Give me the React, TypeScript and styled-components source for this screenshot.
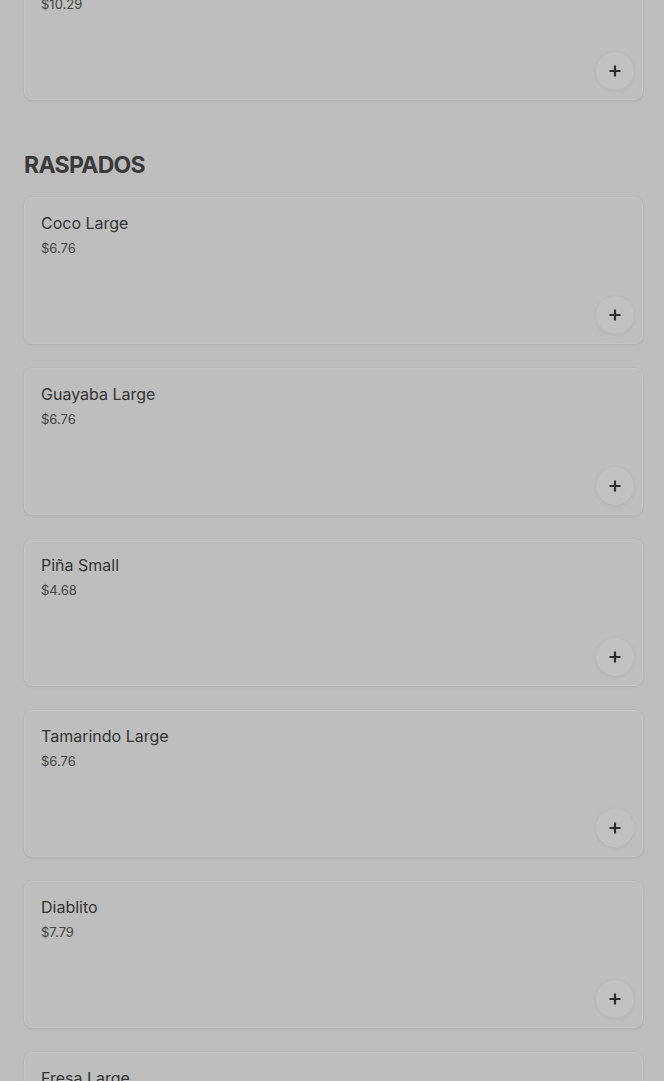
import styled, {createGlobalStyle} from 'styled-components'

const GlobalStyle = createGlobalStyle`
  html, body {
    margin: 0;
    padding: 0;
    background: #bdbdbd;
    font-family: Inter, "Noto Sans", Roboto, sans-serif;
    overflow: hidden;
  }
`

type Item = {name: string; price: string}

const previous: Item = {name: 'Horchata Large', price: '$10.29'}

const raspados: Item[] = [
  {name: 'Coco Large', price: '$6.76'},
  {name: 'Guayaba Large', price: '$6.76'},
  {name: 'Piña Small', price: '$4.68'},
  {name: 'Tamarindo Large', price: '$6.76'},
  {name: 'Diablito', price: '$7.79'},
  {name: 'Fresa Large', price: '$6.76'},
]

const Page = styled.main`
  padding: 0 21px 0 24px;
  margin-top: -47px;
`

const Section = styled.section`
  display: flex;
  flex-direction: column;
  gap: 24px;
`

const Heading = styled.h2`
  margin: 25px 0 -8px;
  font-size: 23px;
  line-height: 32px;
  font-weight: 700;
  letter-spacing: -0.7px;
  color: #3a3a3a;
`

const Card = styled.article`
  display: flex;
  flex-direction: column;
  height: 147px;
  box-sizing: border-box;
  padding: 15px 8px 9px 16px;
  border: 1px solid #c5c5c5;
  border-radius: 8px;
  background: #bebebe;
  box-shadow: 0 1px 3px rgba(0, 0, 0, 0.06), 0 0 0 1px rgba(0, 0, 0, 0.02);
`

const Title = styled.h3`
  margin: 0;
  font-size: 16px;
  line-height: 20px;
  font-weight: 420;
  color: #333;
`

const Price = styled.span`
  margin-top: 6px;
  font-size: 13px;
  line-height: 18px;
  color: #444;
`

const AddButton = styled.button`
  margin-top: auto;
  align-self: flex-end;
  width: 38px;
  height: 38px;
  display: grid;
  place-items: center;
  padding: 0;
  border: none;
  border-radius: 50%;
  background: #c1c1c1;
  box-shadow: 0 1px 4px rgba(0, 0, 0, 0.08);
  color: #2b2b2b;
`

const Plus = () => (
  <svg width="14" height="14" viewBox="0 0 14 14" fill="none">
    <path d="M7 1.5v11M1.5 7h11" stroke="currentColor" strokeWidth="2.2" />
  </svg>
)

const MenuCard = ({item}: {item: Item}) => (
  <Card>
    <Title>{item.name}</Title>
    <Price>{item.price}</Price>
    <AddButton aria-label={`Add ${item.name}`}>
      <Plus />
    </AddButton>
  </Card>
)

export default function App() {
  return (
    <>
      <GlobalStyle />
      <Page>
        <Section>
          <MenuCard item={previous} />
          <Heading>RASPADOS</Heading>
          {raspados.map((item) => (
            <MenuCard key={item.name} item={item} />
          ))}
        </Section>
      </Page>
    </>
  )
}
